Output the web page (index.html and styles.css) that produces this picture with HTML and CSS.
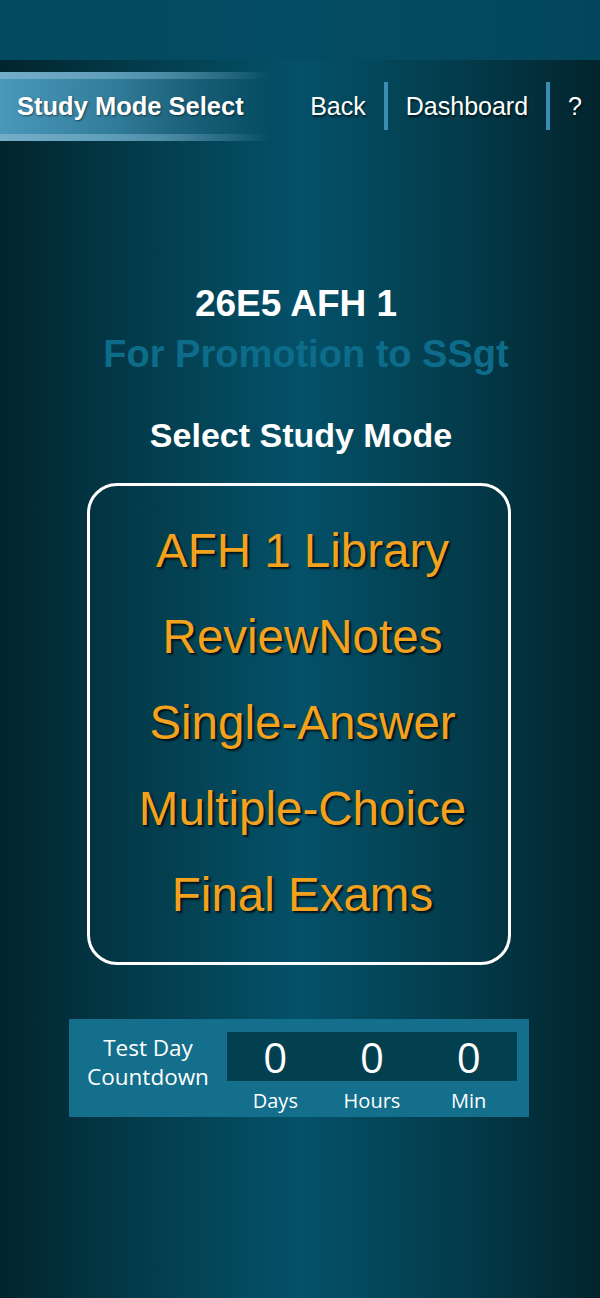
FILE: index.html
```html
<!DOCTYPE html>
<html lang=en>
    <head>
        <meta charset="utf8">
        <meta name="viewport" content="width=device-width, initial-scale=1.0">
        <title>Study Mode Select</title>
        <link rel="stylesheet" href="styles.css">
    </head>
    <body>
        <div id="header"></div>
        <div id="nav">
            <div id="tab">Study Mode Select</div>
            <div id="links">
                <a href="#">Back</a>
                <span class="sep"></span>
                <a href="#">Dashboard</a>
                <span class="sep"></span>
                <a href="#">?</a>
            </div>
        </div>
        <div id="main">
            <h1 id="course">26E5 AFH 1</h1>
            <h2 id="promotion">For Promotion to SSgt</h2>
            <h3 id="select">Select Study Mode</h3>
            <div id="modes">
                <a href="#" class="mode">AFH 1 Library</a>
                <a href="#" class="mode">ReviewNotes</a>
                <a href="#" class="mode">Single-Answer</a>
                <a href="#" class="mode">Multiple-Choice</a>
                <a href="#" class="mode">Final Exams</a>
            </div>
            <div id="countdown">
                <div class="countdown_label">Test Day<br>Countdown</div>
                <div class="countdown_values">
                    <div class="digits">
                        <span>0</span>
                        <span>0</span>
                        <span>0</span>
                    </div>
                    <div class="units">
                        <span>Days</span>
                        <span>Hours</span>
                        <span>Min</span>
                    </div>
                </div>
            </div>
        </div>
    </body>
</html>
```

FILE: styles.css
```css
body {
    font-family: "Liberation Sans", Arial, sans-serif;
    margin: 0;
    min-height: 1298px;
    color: white;
    background: linear-gradient(to right, #02242d 0%, #033d4d 25%, #045169 50%, #033d4d 75%, #02242d 100%);
}
a {
    color: inherit;
    text-decoration: none;
}
#header {
    height: 60px;
    background: linear-gradient(to right, #034960, #044c63 50%, #03465c);
}
#nav {
    display: flex;
    align-items: center;
    height: 90px;
}
#tab {
    align-self: flex-start;
    margin-top: 12px;
    width: 270px;
    height: 69px;
    box-sizing: border-box;
    padding: 0 0 0 17px;
    display: flex;
    align-items: center;
    font-size: 25.5px;
    font-weight: bold;
    text-shadow: 1px 1px 2px rgba(0, 0, 0, 0.5);
    background:
        linear-gradient(to right, rgba(120, 175, 200, 0.9), rgba(120, 175, 200, 0.5) 60%, rgba(120, 175, 200, 0)) top / 100% 7px no-repeat,
        linear-gradient(to right, rgba(120, 175, 200, 0.9), rgba(120, 175, 200, 0.5) 60%, rgba(120, 175, 200, 0)) bottom / 100% 7px no-repeat,
        linear-gradient(to right, #4a98ba, #2f7a98 45%, rgba(20, 80, 100, 0));
}
#links {
    margin-left: auto;
    margin-top: 2px;
    padding-right: 18px;
    display: flex;
    align-items: center;
    gap: 18px;
    font-size: 25px;
    text-shadow: 1px 2px 2px rgba(0, 0, 0, 0.6);
}
.sep {
    width: 4px;
    height: 48px;
    background-color: #3b8db2;
}
#main {
    display: flex;
    flex-direction: column;
    align-items: center;
    padding-top: 133px;
}
#course {
    margin: 0 0 0 -8px;
    font-size: 37px;
    line-height: 42px;
}
#promotion {
    margin: 7px 0 0 12px;
    font-size: 38px;
    line-height: 44px;
    color: #0d6c8a;
}
#select {
    margin: 39px 0 0 2px;
    font-size: 34px;
    line-height: 40px;
}
#modes {
    margin: 28px 0 0 -2px;
    width: 424px;
    box-sizing: border-box;
    padding: 22px 0 24px 7px;
    border: 3px solid white;
    border-radius: 30px;
    display: flex;
    flex-direction: column;
    align-items: center;
}
.mode {
    font-size: 47.5px;
    line-height: 86px;
    color: #f4a21e;
    text-shadow: 2px 2px 2px rgba(0, 0, 0, 0.75);
}
#countdown {
    margin: 54px 0 0 -2px;
    width: 460px;
    height: 98px;
    box-sizing: border-box;
    padding: 13px 12px 0 0;
    display: flex;
    background-color: #136f8c;
    font-family: "Open Sans", sans-serif;
}
.countdown_label {
    width: 158px;
    margin-top: 1px;
    font-size: 22.5px;
    line-height: 29px;
    text-align: center;
}
.countdown_values {
    flex: 1;
}
.digits, .units {
    display: grid;
    grid-template-columns: 1fr 1fr 1fr;
    text-align: center;
}
.digits {
    height: 49px;
    background-color: #03404f;
    font-size: 42px;
    line-height: 49px;
}
.units {
    padding-top: 5px;
    font-size: 20px;
    line-height: 30px;
}
```
